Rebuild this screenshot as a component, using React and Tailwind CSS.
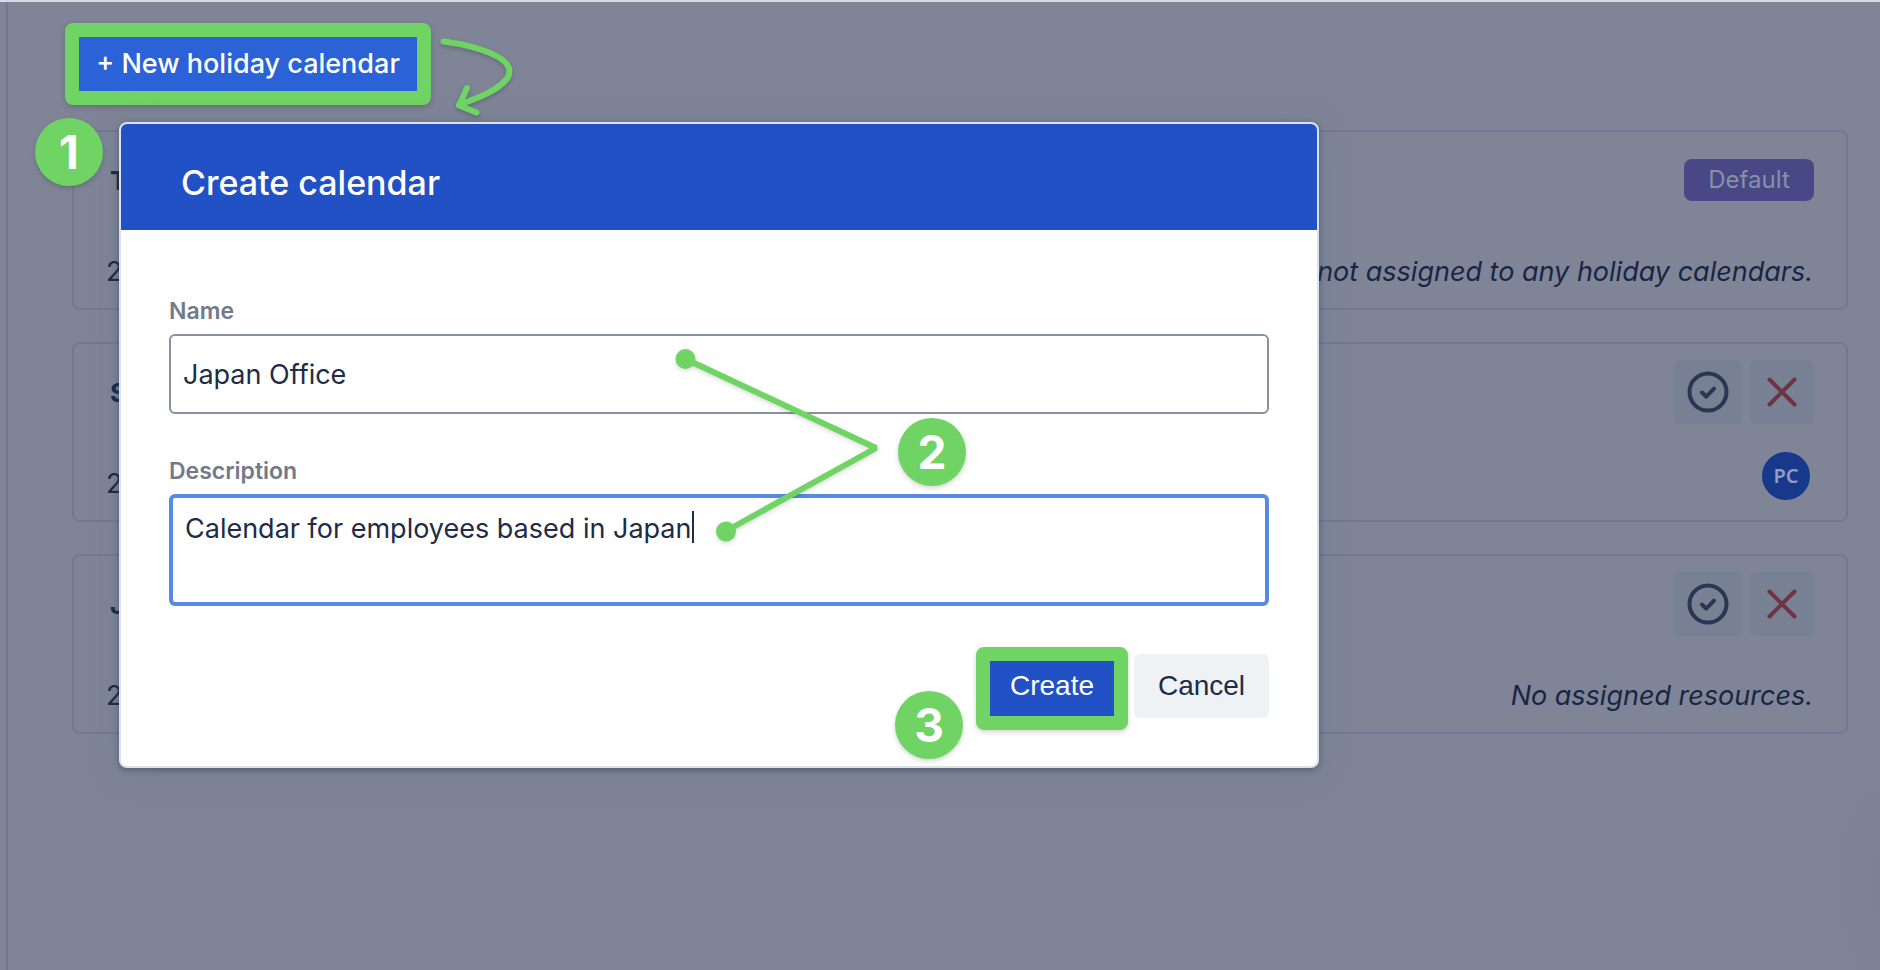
const calendars = [
  { id: "t", name: "T", year: "2", isDefault: true, note: "not assigned to any holiday calendars." },
  { id: "s", name: "S", year: "2", initials: "PC" },
  { id: "j", name: "J", year: "2", note: "No assigned resources." },
];

function CheckIcon() {
  return (
    <svg width="42" height="42" viewBox="0 0 42 42" fill="none" stroke="currentColor" strokeWidth="4" strokeLinecap="round" strokeLinejoin="round" aria-hidden="true">
      <circle cx="21" cy="21" r="18.5" />
      <path d="M15 21.5l4.2 4.2 7.8-8" />
    </svg>
  );
}

function CrossIcon() {
  return (
    <svg width="32" height="32" viewBox="0 0 32 32" fill="none" stroke="currentColor" strokeWidth="4" strokeLinecap="round" aria-hidden="true">
      <path d="M3.5 3.5l25 25M28.5 3.5l-25 25" />
    </svg>
  );
}

function Step({ n, className }) {
  return (
    <span className={`absolute flex h-[68px] w-[68px] items-center justify-center rounded-full bg-[#70d464] text-[46px] leading-none font-bold text-white shadow-[0_2px_5px_rgba(0,0,0,0.18)] ${className}`}>
      {n}
    </span>
  );
}

function CalendarCard({ name, year, isDefault, note, initials }) {
  return (
    <li className="flex h-[180px] flex-col justify-between rounded-lg border-2 border-[#737990] pr-8 pl-8">
      <div className="flex h-24 items-center justify-between">
        <h2 className="pl-1 text-[26px] font-bold">{name}</h2>
        {isDefault ? (
          <span className="flex h-[42px] w-[130px] items-center justify-center rounded-lg bg-[#474885] text-[24px] text-[#8a8fa8]">Default</span>
        ) : (
          <div className="flex gap-2">
            <button type="button" aria-label="Make default" className="flex h-16 w-[68px] items-center justify-center rounded-md bg-[#788094] text-[#2b3655]">
              <CheckIcon />
            </button>
            <button type="button" aria-label="Delete" className="flex h-16 w-16 items-center justify-center rounded-md bg-[#788094] text-[#6e3443]">
              <CrossIcon />
            </button>
          </div>
        )}
      </div>
      <div className="flex h-20 items-center justify-between pt-2 text-[27px]">
        <span>{year}</span>
        {note && <em className="pr-px">{note}</em>}
        {initials && (
          <span className="mr-1 mb-4 flex h-12 w-12 items-center justify-center rounded-full bg-[#18388b] font-['Noto_Sans',sans-serif] text-[20px] font-semibold text-[#939cbc]">
            {initials}
          </span>
        )}
      </div>
    </li>
  );
}

function CreateDialog() {
  return (
    <section
      role="dialog"
      aria-labelledby="dialog-title"
      className="relative w-full max-w-[1200px] rounded-lg border-2 border-[#dde1ea] bg-white shadow-[0_2px_6px_rgba(23,43,77,0.4),0_4px_36px_rgba(80,110,130,0.24)]"
    >
      <header className="flex h-[106px] items-center rounded-t-md bg-[#2151c4] px-[60px] pt-[10px]">
        <h1 id="dialog-title" className="text-[34px] font-medium text-white">Create calendar</h1>
      </header>
      <form className="flex flex-col px-12 pt-[67px] pb-9" onSubmit={(e) => e.preventDefault()}>
        <label htmlFor="name" className="mb-[9px] text-[23px] leading-7 font-semibold text-[#727a8a]">Name</label>
        <input
          id="name"
          type="text"
          defaultValue="Japan Office"
          className="h-20 rounded-md border-2 border-[#8b90a1] bg-white px-3 text-[27px] text-[#202b48] outline-none"
        />
        <label htmlFor="description" className="mt-[43px] mb-[9px] text-[23px] leading-7 font-semibold text-[#727a8a]">Description</label>
        <div className="relative">
          <textarea
            id="description"
            defaultValue="Calendar for employees based in Japan"
            className="block h-28 w-full resize-none rounded-md border-4 border-[#568ae3] bg-white px-3 py-[13px] text-[27px] leading-9 text-[#202b48] outline-none"
          />
          <span className="absolute top-[17px] left-[523px] h-8 w-0.5 bg-[#202b48]" />
        </div>
        <div className="mt-[41px] flex items-start justify-end gap-[6px] font-['Liberation_Sans',Arial,sans-serif] text-[28px]">
          <button type="submit" className="flex h-[83px] w-[152px] items-center justify-center rounded-lg border-[14px] border-[#70d464] bg-[#2151c4] pb-[6px] text-white shadow-[0_2px_5px_rgba(0,0,0,0.18)]">
            Create
          </button>
          <button type="button" className="mt-[7px] flex h-16 w-[135px] items-center justify-center rounded-md bg-[#eff2f4] text-[#202b48]">
            Cancel
          </button>
        </div>
      </form>
      <svg className="pointer-events-none absolute top-[216px] left-[544px] drop-shadow-[0_2px_2px_rgba(0,0,0,0.15)]" width="224" height="212" viewBox="0 0 224 212" fill="none" aria-hidden="true">
        <path d="M20.5 19L211 108 61 191" stroke="#70d464" strokeWidth="6" strokeLinecap="round" strokeLinejoin="bevel" />
        <circle cx="20.5" cy="19" r="10" fill="#70d464" />
        <circle cx="61" cy="191.5" r="10" fill="#70d464" />
      </svg>
      <Step n="2" className="top-[294px] left-[777px]" />
      <Step n="3" className="top-[567px] left-[774px]" />
    </section>
  );
}

export default function App() {
  return (
    <div className="relative flex min-h-screen flex-col overflow-hidden border-t-2 border-[#d8dae2] bg-[#7f8597] bg-[radial-gradient(ellipse_60px_130px_at_100%_91%,#7c8193,#7f8597)] font-[Inter,'Liberation_Sans',sans-serif] text-[#182544]">
      <main className="ml-[6px] flex-1 border-l-2 border-[#72788d] pr-8 pl-16">
        <div className="-ml-[7px] pt-[21px]">
          <button type="button" className="flex h-[82px] w-[366px] items-center justify-center rounded-lg border-[14px] border-[#70d464] bg-[#2c62d8] text-[27px] font-medium text-white shadow-[0_2px_6px_rgba(0,0,0,0.2)]">
            + New holiday calendar
          </button>
        </div>
        <ul className="mt-[25px] flex flex-col gap-8">
          {calendars.map((c) => (
            <CalendarCard key={c.id} {...c} />
          ))}
        </ul>
      </main>
      <div className="absolute inset-0 pt-[120px] pl-[119px]">
        <CreateDialog />
      </div>
      <svg className="pointer-events-none absolute top-[28px] left-[430px] drop-shadow-[0_2px_2px_rgba(0,0,0,0.2)]" width="100" height="96" viewBox="430 30 100 96" fill="none" stroke="#70d464" strokeWidth="6" strokeLinecap="round" strokeLinejoin="round" aria-hidden="true">
        <path d="M443.5 41.5C478 46 509.5 57 509.5 71.5C509.5 83 488 95 459.5 104.5" />
        <path d="M467 88L459 105.5L476.5 112.5" />
      </svg>
      <Step n="1" className="top-[116px] left-[35px]" />
    </div>
  );
}
